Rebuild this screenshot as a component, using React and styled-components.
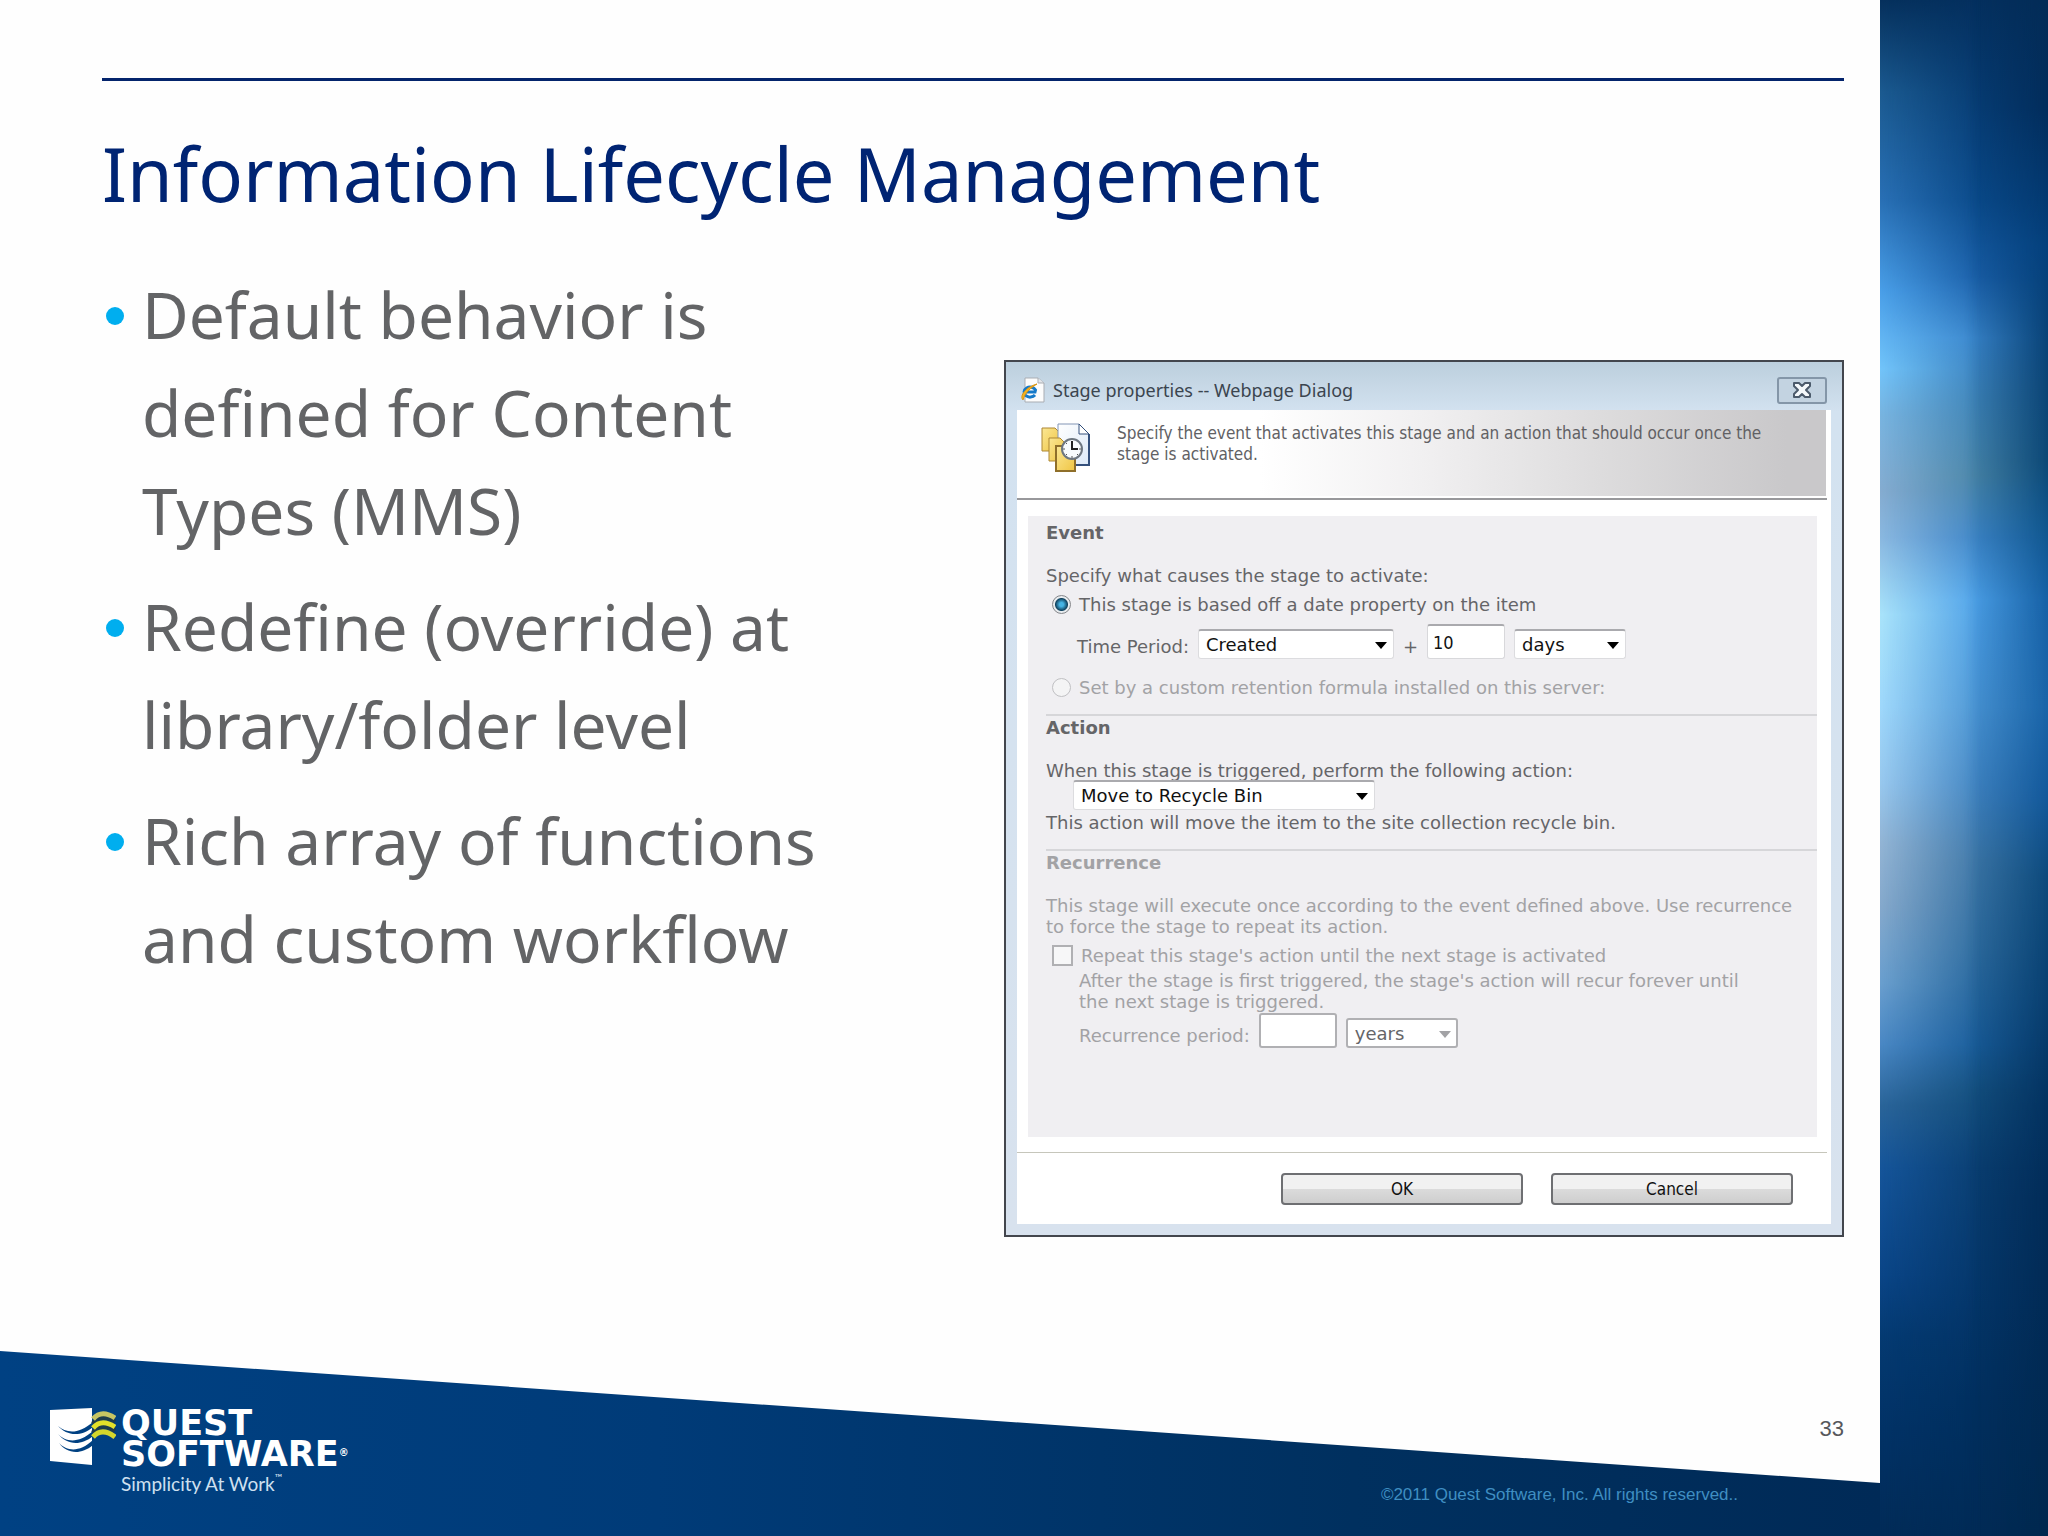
import React, { useState } from "react";
import styled, { createGlobalStyle } from "styled-components";

const GlobalStyle = createGlobalStyle`
  * {
    box-sizing: border-box;
  }
  body {
    margin: 0;
    background: #002d5c;
  }
  h1, h2, ul, p {
    margin: 0;
    padding: 0;
  }
`;

const bullets = [
  "Default behavior is defined for Content Types (MMS)",
  "Redefine (override) at library/folder level",
  "Rich array of functions and custom workflow",
];

const QuestMark = () => (
  <svg width="66" height="57" viewBox="0 0 66 57" aria-hidden="true">
    <path d="M0 2 L42 0 V57 L0 53 Z" fill="#fff" />
    <g fill="#004182">
      <path d="M8 18 C16 25 28 27 43 14 V19 C30 30 16 27 8 18 Z" />
      <path d="M8 26 C16 34 28 36 43 23 V28 C30 39 16 36 8 26 Z" />
      <path d="M9 35 C17 43 29 45 43 32 V37 C30 48 16 45 9 35 Z" />
    </g>
    <g fill="none" strokeWidth="5">
      <path d="M43 16 C49 9 56 7 65 14" stroke="#1d3b4c" />
      <path d="M43 25 C49 18 56 16 65 23" stroke="#1d3b4c" />
      <path d="M43 11 C49 4 56 4 65 10" stroke="#c6c463" />
      <path d="M43 20 C49 13 56 13 65 19" stroke="#e3e02a" />
      <path d="M43 29 C49 22 56 22 65 29" stroke="#d3d62c" />
    </g>
  </svg>
);

const BrowserIcon = () => (
  <svg width="24" height="26" viewBox="0 0 24 26" aria-hidden="true">
    <path d="M4 1 H17 L23 6 V25 H4 Z" fill="#fcfcfc" stroke="#a9adb3" />
    <path d="M17 1 V6 H23" fill="#e4e6ea" stroke="#a9adb3" />
    <path
      d="M14 18 A6 5 0 1 1 14.500 13 L14 15 H5"
      fill="none"
      stroke="#1479c9"
      strokeWidth="3"
    />
    <path
      d="M2 23 C-2 19 5 10 16 7 C11 10 4 15 2 23 Z"
      fill="#f4b322"
      stroke="#d99514"
    />
  </svg>
);

const StageIcon = () => (
  <svg width="50" height="50" viewBox="0 0 50 50" aria-hidden="true">
    <defs>
      <linearGradient id="folder" x1="0" y1="0" x2="1" y2="1">
        <stop offset="0" stopColor="#fbe794" />
        <stop offset="1" stopColor="#efc544" />
      </linearGradient>
      <linearGradient id="sheet" x1="0" y1="0" x2="1" y2="1">
        <stop offset="0" stopColor="#ffffff" />
        <stop offset="1" stopColor="#dce9f8" />
      </linearGradient>
    </defs>
    <path d="M1 5 H14 L18 9 V28 H1 Z" fill="url(#folder)" stroke="#ad8735" />
    <path d="M17 1 H38 L48 11 V42 H17 Z" fill="url(#sheet)" stroke="#8295b5" />
    <path d="M38 1 V11 H48 Z" fill="#fff" stroke="#34507c" />
    <path d="M48 11 V42 H32" fill="none" stroke="#34507c" strokeWidth="2" />
    <path d="M8 15 H19 L23 19 V38 H8 Z" fill="url(#folder)" stroke="#ad8735" />
    <path d="M15 23 H26 L34 31 V48 H15 Z" fill="url(#folder)" stroke="#8f6f2a" strokeWidth="2" />
    <circle cx="31" cy="26" r="10" fill="#f8fbfd" stroke="#6d7680" strokeWidth="2" />
    <path d="M31 18 V26 H37" fill="none" stroke="#222" strokeWidth="2" />
    <path d="M31 33 V35 M22 26 H24 M38 26 H40 M25 20 L26 21 M25 32 L26 31 M37 32 L36 31" stroke="#555" />
  </svg>
);

const CloseIcon = () => (
  <svg width="18" height="16" viewBox="0 0 18 16" aria-hidden="true">
    <path
      d="M1 1 H6 L9 4 L12 1 H17 V4 L13 8 L17 12 V15 H12 L9 12 L6 15 H1 V12 L5 8 L1 4 Z"
      fill="#f4f8fb"
      stroke="#4b5a6b"
      strokeWidth="2"
      strokeLinejoin="round"
    />
  </svg>
);

const App = () => {
  const [basis, setBasis] = useState("date");
  const [source, setSource] = useState("Created");
  const [amount, setAmount] = useState("10");
  const [unit, setUnit] = useState("days");
  const [action, setAction] = useState("Move to Recycle Bin");

  return (
    <>
      <GlobalStyle />
      <Slide>
        <Sheet>
          <Content>
            <Title>Information Lifecycle Management</Title>
            <Columns>
              <BulletList>
                {bullets.map((b) => (
                  <Bullet key={b}>{b}</Bullet>
                ))}
              </BulletList>

              <Dialog role="dialog" aria-labelledby="dialog-title">
                <TitleBar>
                  <BrowserIcon />
                  <DialogTitle id="dialog-title">
                    Stage properties -- Webpage Dialog
                  </DialogTitle>
                  <CloseButton type="button" aria-label="Close">
                    <CloseIcon />
                  </CloseButton>
                </TitleBar>
                <DialogBody>
                  <Banner>
                    <StageIcon />
                    <BannerText>
                      Specify the event that activates this stage and an action
                      that should occur once the stage is activated.
                    </BannerText>
                  </Banner>

                  <Panel>
                    <Section>
                      <SectionTitle>Event</SectionTitle>
                      <Text>Specify what causes the stage to activate:</Text>
                      <OptionRow>
                        <Radio
                          id="by-date"
                          name="basis"
                          checked={basis === "date"}
                          onChange={() => setBasis("date")}
                        />
                        <label htmlFor="by-date">
                          This stage is based off a date property on the item
                        </label>
                      </OptionRow>
                      <FieldRow>
                        <label htmlFor="source">Time Period:</label>
                        <SelectBox $width={196}>
                          <Select
                            id="source"
                            value={source}
                            onChange={(e) => setSource(e.target.value)}
                          >
                            <option>Created</option>
                            <option>Modified</option>
                          </Select>
                        </SelectBox>
                        <Plus>+</Plus>
                        <NumberBox
                          aria-label="Amount"
                          value={amount}
                          onChange={(e) => setAmount(e.target.value)}
                        />
                        <SelectBox $width={112}>
                          <Select
                            aria-label="Unit"
                            value={unit}
                            onChange={(e) => setUnit(e.target.value)}
                          >
                            <option>days</option>
                            <option>months</option>
                            <option>years</option>
                          </Select>
                        </SelectBox>
                      </FieldRow>
                      <OptionRow $muted $spaced>
                        <Radio id="by-formula" name="basis" disabled />
                        <label htmlFor="by-formula">
                          Set by a custom retention formula installed on this
                          server:
                        </label>
                      </OptionRow>
                    </Section>

                    <Section>
                      <SectionTitle>Action</SectionTitle>
                      <Text as="label" htmlFor="action">
                        When this stage is triggered, perform the following
                        action:
                      </Text>
                      <ActionRow>
                        <SelectBox $width={302}>
                          <Select
                            id="action"
                            value={action}
                            onChange={(e) => setAction(e.target.value)}
                          >
                            <option>Move to Recycle Bin</option>
                            <option>Permanently Delete</option>
                          </Select>
                        </SelectBox>
                      </ActionRow>
                      <Text>
                        This action will move the item to the site collection
                        recycle bin.
                      </Text>
                    </Section>

                    <Section $muted>
                      <SectionTitle>Recurrence</SectionTitle>
                      <Text>
                        This stage will execute once according to the event
                        defined above. Use recurrence to force the stage to
                        repeat its action.
                      </Text>
                      <OptionRow $muted>
                        <Checkbox id="repeat" disabled />
                        <label htmlFor="repeat">
                          Repeat this stage's action until the next stage is
                          activated
                        </label>
                      </OptionRow>
                      <Hint>
                        After the stage is first triggered, the stage's action
                        will recur forever until the next stage is triggered.
                      </Hint>
                      <FieldRow $tight>
                        <label htmlFor="period">Recurrence period:</label>
                        <NumberBox id="period" disabled />
                        <SelectBox $width={112} $disabled>
                          <Select aria-label="Recurrence unit" disabled>
                            <option>years</option>
                          </Select>
                        </SelectBox>
                      </FieldRow>
                    </Section>
                  </Panel>

                  <Actions>
                    <DialogButton type="button">OK</DialogButton>
                    <DialogButton type="button">Cancel</DialogButton>
                  </Actions>
                </DialogBody>
              </Dialog>
            </Columns>
          </Content>

          <Footer>
            <Brand>
              <QuestMark />
              <div>
                <BrandName>
                  QUEST
                  <br />
                  SOFTWARE<sup>®</sup>
                </BrandName>
                <Tagline>
                  Simplicity At Work<sup>™</sup>
                </Tagline>
              </div>
            </Brand>
            <Meta>
              <PageNumber>33</PageNumber>
              <Copyright>
                ©2011 Quest Software, Inc. All rights reserved..
              </Copyright>
            </Meta>
          </Footer>
        </Sheet>
        <Glow />
      </Slide>
    </>
  );
};

const Slide = styled.div`
  display: grid;
  grid-template-columns: minmax(0, 1fr) 168px;
  min-height: 100vh;
`;

const Sheet = styled.main`
  display: flex;
  flex-direction: column;
  background: #fefefe;
`;

const Content = styled.div`
  flex: 1;
  margin: 78px 36px 0 102px;
  border-top: 3px solid #04246c;
`;

const Title = styled.h1`
  margin-top: 43px;
  font: 400 74px/100px "Noto Sans", "Open Sans", sans-serif;
  color: #002473;
`;

const Columns = styled.div`
  display: grid;
  grid-template-columns: minmax(0, 1fr) minmax(0, 840px);
  gap: 120px;
  margin-top: 42px;
`;

const BulletList = styled.ul`
  display: flex;
  flex-direction: column;
  gap: 18px;
  list-style: none;
  font: 400 64px/98px "Noto Sans", "Open Sans", sans-serif;
  color: #636466;
`;

const Bullet = styled.li`
  display: flex;
  gap: 18px;

  &::before {
    content: "";
    flex: none;
    width: 18px;
    height: 18px;
    margin: 41px 0 0 4px;
    border-radius: 50%;
    background: #00aeef;
  }
`;

const Dialog = styled.section`
  align-self: start;
  margin-top: 94px;
  padding: 0 11px 11px;
  border: 2px solid #43464d;
  background: linear-gradient(#bccfdd, #d3e2f0 50px, #d8e2ee);
`;

const TitleBar = styled.header`
  display: flex;
  align-items: center;
  height: 48px;
  padding: 8px 4px 0;
`;

const DialogTitle = styled.h2`
  flex: 1;
  margin-left: 8px;
  font: 400 18px/24px "Noto Sans", "Open Sans", sans-serif;
  color: #3b454f;
`;

const CloseButton = styled.button`
  display: flex;
  align-items: center;
  justify-content: center;
  width: 50px;
  height: 27px;
  padding: 0;
  border: 2px solid #8496a8;
  border-radius: 3px;
  background: #c3d3e1;
`;

const DialogBody = styled.div`
  background: #fff;
`;

const Banner = styled.div`
  display: flex;
  gap: 26px;
  height: 90px;
  margin-right: 4px;
  padding: 13px 46px 0 24px;
  border-bottom: 2px solid #98989b;
  background: linear-gradient(to right, #fff 30%, #f1f0f1 50%, #dddcdd 72%, #c9c8ca 95%);
  box-shadow: inset -1px -2px 0 #fff;

  svg {
    flex: none;
  }
`;

const BannerText = styled.p`
  font: 400 17px/21px "DejaVu Sans Condensed", "DejaVu Sans", sans-serif;
  color: #616164;
`;

const Panel = styled.div`
  min-height: 621px;
  margin: 16px 14px 0 11px;
  padding: 5px 0 0 18px;
  background: #f0eff2;
  font: 400 18px/21px "DejaVu Sans", sans-serif;
`;

const Section = styled.section`
  padding-bottom: 16px;
  color: ${(props) => (props.$muted ? "#a2a2a5" : "#656568")};

  & + & {
    border-top: 2px solid #d6d6d9;
  }
`;

const SectionTitle = styled.h2`
  margin: 1px 0 22px;
  font-size: 18px;
  line-height: 21px;
`;

const Text = styled.p`
  display: block;
  padding-right: 8px;
`;

const OptionRow = styled.div`
  display: flex;
  align-items: center;
  gap: 8px;
  margin-top: ${(props) => (props.$spaced ? 18 : 8)}px;
  padding-left: 6px;
  color: ${(props) => (props.$muted ? "#a2a2a5" : "inherit")};
`;

const Radio = styled.input.attrs({ type: "radio" })`
  appearance: none;
  width: 19px;
  height: 19px;
  margin: 0;
  border: 1px solid #85868a;
  border-radius: 50%;
  background: #f4f4f5;

  &:checked {
    background: radial-gradient(circle, #46b4e4 0 2px, #10425f 6px, #e8ecef 7px);
  }

  &:disabled {
    border-color: #c0c0c3;
  }
`;

const Checkbox = styled.input.attrs({ type: "checkbox" })`
  appearance: none;
  width: 21px;
  height: 21px;
  margin: 0;
  border: 2px solid #b0b0b3;
  background: #f7f7f8;
`;

const FieldRow = styled.div`
  display: flex;
  align-items: flex-end;
  gap: 9px;
  margin-top: ${(props) => (props.$tight ? 1 : 9)}px;
  padding-left: ${(props) => (props.$tight ? 33 : 31)}px;

  label {
    padding-bottom: 2px;
  }
`;

const Plus = styled.span`
  line-height: 24px;
`;

const NumberBox = styled.input.attrs({ type: "text" })`
  width: 78px;
  height: 35px;
  padding: 0 5px;
  border: 1px solid #d8d8db;
  border-top: 2px solid #aaaaae;
  border-radius: 3px;
  background: #fff;
  font: 400 18px/24px "DejaVu Sans Condensed", "DejaVu Sans", sans-serif;
  color: #111;

  &:disabled {
    border: 2px solid #b0b0b3;
  }
`;

const SelectBox = styled.div`
  position: relative;
  width: ${(props) => props.$width}px;

  &::after {
    content: "";
    position: absolute;
    top: 13px;
    right: 7px;
    border: 6px solid transparent;
    border-top: 7px solid ${(props) => (props.$disabled ? "#a2a2a5" : "#000")};
    border-bottom: 0;
    pointer-events: none;
  }
`;

const Select = styled.select`
  appearance: none;
  display: block;
  width: 100%;
  height: 30px;
  padding: 0 24px 0 7px;
  border: 1px solid #dcdcdf;
  border-top: 2px solid #aaaaae;
  border-radius: 3px;
  background: #fff;
  font: 400 18px/21px "DejaVu Sans", sans-serif;
  color: #111;

  &:disabled {
    border: 2px solid #b0b0b3;
    color: #656568;
    opacity: 1;
  }
`;

const ActionRow = styled.div`
  margin: -1px 0 2px;
  padding-left: 27px;
`;

const Hint = styled.p`
  margin-top: 4px;
  padding: 0 50px 0 33px;
`;

const Actions = styled.div`
  display: flex;
  justify-content: flex-end;
  gap: 28px;
  margin: 15px 4px 0 0;
  padding: 20px 34px 19px;
  border-top: 1px solid #c6c6bb;
`;

const DialogButton = styled.button`
  width: 242px;
  height: 32px;
  padding: 0;
  border: 2px solid #6e6f72;
  border-radius: 4px;
  background: linear-gradient(#f1f1f1 0 50%, #dbdbdb 50%, #cecece);
  font: 400 17px/24px "DejaVu Sans Condensed", "DejaVu Sans", sans-serif;
  color: #111;
`;

const Footer = styled.footer`
  position: relative;
  display: flex;
  justify-content: space-between;
  min-height: 185px;

  /* slanted blue band */
  &::before {
    content: "";
    position: absolute;
    inset: 0;
    background: linear-gradient(to right, #004183, #003b78 35%, #00305f 72%, #002a57);
    clip-path: polygon(0 0, 100% 132px, 100% 100%, 0 100%);
  }
`;

const Brand = styled.div`
  position: relative;
  display: flex;
  gap: 5px;
  padding: 57px 0 0 50px;
  color: #fff;

  sup {
    font-size: 10px;
    line-height: 0;
    vertical-align: 10px;
  }
`;

const BrandName = styled.div`
  font: 700 35px/31px "DejaVu Sans", sans-serif;
`;

const Tagline = styled.div`
  margin-top: 2px;
  font: 400 19px/24px Lato, "Noto Sans", sans-serif;
  color: #cfe0f0;
`;

const Meta = styled.div`
  position: relative;
  display: flex;
  flex-direction: column;
  align-items: flex-end;
  gap: 44px;
  padding: 66px 36px 0 0;
  font-family: "Liberation Sans", Arial, sans-serif;
`;

const PageNumber = styled.span`
  font-size: 22px;
  line-height: 24px;
  color: #57585b;
`;

const Copyright = styled.small`
  margin-right: 106px;
  font-size: 17px;
  line-height: 20px;
  color: #3f8ec2;
`;

/* light streaks: one vertical run each for the right, middle and left edge */
const Glow = styled.aside`
  position: relative;
  background: linear-gradient(
    #032c57, #022d5c 7%, #04407c 16%, #0b4475 25%, #0c4876 30%, #0f558c 34%,
    #1661a6 39%, #1964a8 46%, #12589a 52%, #0d4a7c 57%, #083f70 65%,
    #033260 72%, #022c58 78%, #01284f
  );

  &::before,
  &::after {
    content: "";
    position: absolute;
    inset: 0;
  }

  &::before {
    background: linear-gradient(
      #04305f, #0a4a8a 13%, #1a5fa8 18%, #3a86cc 22%, #3f84b8 26%,
      #4a86a8 31%, #3f86c8 35%, #4fa3ea 39%, #4b95d4 46%, #4285c2 51%,
      #3f78a8 56%, #2f6da0 62%, #195d9a 68%, #14507f 71%, #0a3f72 76%,
      #04366a 85%, #013060 91%, #012b57
    );
    mask-image: linear-gradient(to right, #000 50%, transparent);
  }

  &::after {
    background: linear-gradient(
      #05305c, #1b5a90 6%, #2970b5 13%, #4a9fe8 19%, #72c4fa 24%,
      #78b4e0 27%, #85acd0 32%, #8ab8e0 35%, #a9e3fa 40%, #9fd8fb 46%,
      #98c8ee 51%, #92b4d4 55%, #85a9cc 59%, #6a9fce 64%, #4a88c4 68%,
      #2a6499 72%, #15559a 76%, #0a4587 83%, #043a72 87%, #013266 93%,
      #012b57
    );
    mask-image: linear-gradient(to right, #000, transparent 60%);
  }
`;

export default App;
